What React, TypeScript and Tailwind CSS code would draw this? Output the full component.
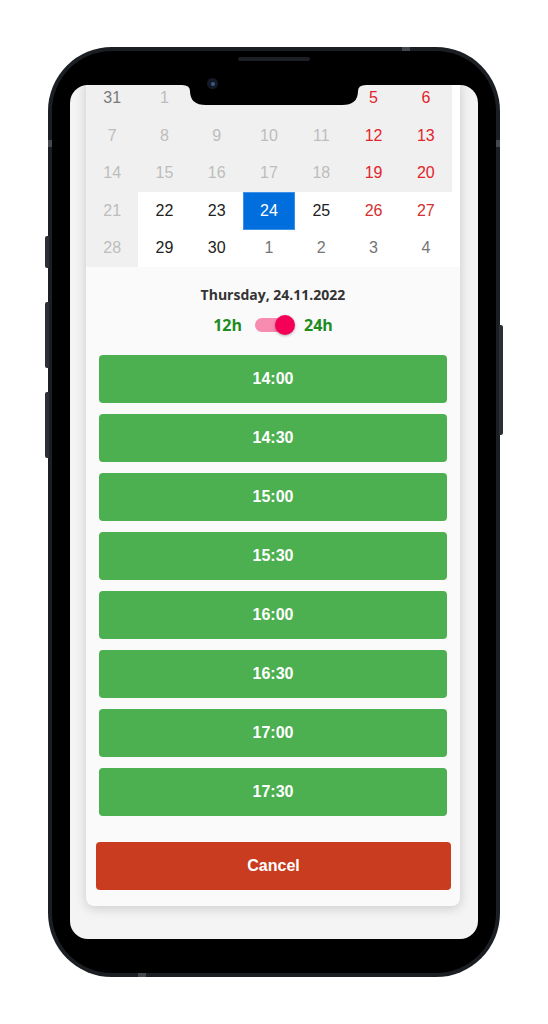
import React from "react"

type Day = { n: number; tone: "off" | "offRed" | "prev" | "on" | "red" | "next" | "sel"; grey: boolean }

const d = (n: number, tone: Day["tone"], grey: boolean): Day => ({ n, tone, grey })

const rows: Day[][] = [
  [d(31, "prev", true), d(1, "off", true), d(2, "off", true), d(3, "off", true), d(4, "off", true), d(5, "offRed", true), d(6, "offRed", true)],
  [d(7, "off", true), d(8, "off", true), d(9, "off", true), d(10, "off", true), d(11, "off", true), d(12, "offRed", true), d(13, "offRed", true)],
  [d(14, "off", true), d(15, "off", true), d(16, "off", true), d(17, "off", true), d(18, "off", true), d(19, "offRed", true), d(20, "offRed", true)],
  [d(21, "off", true), d(22, "on", false), d(23, "on", false), d(24, "sel", false), d(25, "on", false), d(26, "red", false), d(27, "red", false)],
  [d(28, "off", true), d(29, "on", false), d(30, "on", false), d(1, "next", false), d(2, "next", false), d(3, "next", false), d(4, "next", false)],
]

const toneClass: Record<Day["tone"], string> = {
  off: "text-[#bdbdbd]",
  offRed: "text-[#e3242b]",
  prev: "text-[#7a7a7a]",
  on: "text-[#212121]",
  red: "text-[#d32f2f]",
  next: "text-[#757575]",
  sel: "text-white",
}

const cellBg = (day: Day) => {
  if (day.tone === "sel") return "bg-[#006edc] border border-[#3d8fe8]"
  return day.grey ? "bg-[#f0f0f0]" : "bg-white"
}

const slots = ["14:00", "14:30", "15:00", "15:30", "16:00", "16:30", "17:00", "17:30"]

const Calendar = () => (
  <div className="bg-white">
    <div className="grid w-[366px] grid-cols-7">
      {rows.flat().map((day, i) => (
        <div
          key={i}
          className={`flex h-[37.5px] items-center justify-center text-[16px] ${cellBg(day)} ${toneClass[day.tone]}`}
        >
          {day.n}
        </div>
      ))}
    </div>
  </div>
)

const Toggle = () => (
  <div className="mt-[9px] flex items-center justify-center font-['Open_Sans',sans-serif] text-[16px] font-bold text-[#1e8c1e]">
    <span>12h</span>
    <div className="relative ml-[13px] mr-[9px] flex h-[22px] w-[40px] items-center">
      <div className="h-[14px] w-[34px] rounded-full bg-[#f78bb0]" />
      <div className="absolute right-0 top-[1px] h-[20px] w-[20px] rounded-full bg-[#f50057] shadow-[0_1px_3px_rgba(0,0,0,0.3)]" />
    </div>
    <span>24h</span>
  </div>
)

const Card = () => (
  <div className="ml-[16px] mt-[-5.5px] w-[374px] rounded-b-[8px] bg-[#fafafa] pb-[16px] shadow-[0_2px_12px_rgba(0,0,0,0.18)]">
    <Calendar />
    <div className="pt-[19px] text-center font-['Open_Sans',sans-serif] text-[14px] font-bold leading-[18px] text-[#333]">
      Thursday, 24.11.2022
    </div>
    <Toggle />
    <div className="mt-[17.5px] flex flex-col gap-[11px] px-[13px]">
      {slots.map((s) => (
        <button
          key={s}
          className="flex h-[48px] items-center justify-center rounded-[4px] bg-[#4caf50] text-[16px] font-bold text-white"
        >
          {s}
        </button>
      ))}
    </div>
    <div className="mt-[26px] pl-[10px] pr-[9px]">
      <button className="flex h-[48px] w-full items-center justify-center rounded-[4px] bg-[#c93c1f] text-[16px] font-bold text-white">
        Cancel
      </button>
    </div>
  </div>
)

const Notch = () => (
  <svg className="absolute left-[112px] top-0" width="184" height="20" viewBox="0 0 184 20">
    <path d="M0 0 H184 Q176 0 176 6 Q176 20 160 20 H24 Q8 20 8 6 Q8 0 0 0 Z" fill="#000" />
  </svg>
)

export default function App() {
  return (
    <div className="flex min-h-screen justify-center bg-white font-['Liberation_Sans',Arial,sans-serif]">
      <div className="relative mt-[47px] h-[930px] w-[452px] rounded-[64px] bg-[#1b1e23] p-[4px]">
        {/* side buttons */}
        <div className="absolute left-[-3px] top-[189px] h-[32px] w-[4px] rounded-l-[2px] bg-[#2c3036]" />
        <div className="absolute left-[-3px] top-[255px] h-[66px] w-[4px] rounded-l-[2px] bg-[#2c3036]" />
        <div className="absolute left-[-3px] top-[345px] h-[66px] w-[4px] rounded-l-[2px] bg-[#2c3036]" />
        <div className="absolute right-[-3px] top-[278px] h-[110px] w-[4px] rounded-r-[2px] bg-[#2c3036]" />
        {/* antenna marks */}
        <div className="absolute left-0 top-[93px] h-[7px] w-[4px] bg-[#44484f]" />
        <div className="absolute right-0 top-[93px] h-[7px] w-[4px] bg-[#44484f]" />
        <div className="absolute left-[354px] top-0 h-[4px] w-[8px] bg-[#44484f]" />
        <div className="absolute bottom-0 left-[90px] h-[4px] w-[8px] bg-[#44484f]" />

        <div className="relative h-full w-full rounded-[60px] bg-black px-[18px] py-[34px]">
          <div className="absolute left-[186px] top-[6px] h-[4px] w-[72px] rounded-full bg-[#1c1f24]" />
          <div className="absolute left-[155px] top-[27px] z-10 flex h-[11px] w-[11px] items-center justify-center rounded-full bg-[#141925]">
            <div className="h-[4px] w-[4px] rounded-full bg-[#3b5a8c]" />
          </div>
          <div className="relative h-full w-full overflow-hidden rounded-[18px] bg-[#f4f4f4]">
            <Card />
            <Notch />
          </div>
        </div>
      </div>
    </div>
  )
}
